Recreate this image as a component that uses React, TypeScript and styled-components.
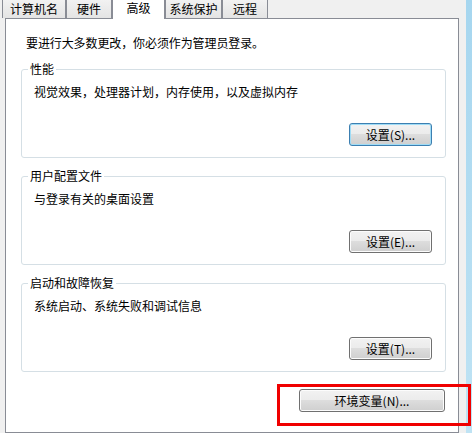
import React from "react";
import styled, { createGlobalStyle } from "styled-components";

const GlobalStyle = createGlobalStyle`
  html, body {
    margin: 0;
    padding: 0;
    background: #f0f0f0;
  }
  body {
    font-family: "Noto Sans CJK SC", "Liberation Sans", sans-serif;
    font-size: 12px;
    color: #000;
  }
`;

const tabs = [
  { label: "计算机名", width: 64 },
  { label: "硬件", width: 46 },
  { label: "高级", width: 53, active: true },
  { label: "系统保护", width: 57 },
  { label: "远程", width: 46 },
];

const groups = [
  { title: "性能", text: "视觉效果，处理器计划，内存使用，以及虚拟内存", button: "设置(S)...", isDefault: true },
  { title: "用户配置文件", text: "与登录有关的桌面设置", button: "设置(E)..." },
  { title: "启动和故障恢复", text: "系统启动、系统失败和调试信息", button: "设置(T)..." },
];

function App() {
  return (
    <Window>
      <GlobalStyle />
      <Main>
        <TabRow>
          {tabs.map((t) => (
            <Tab key={t.label} $active={!!t.active} $width={t.width}>
              {t.label}
            </Tab>
          ))}
        </TabRow>
        <Panel>
          <Intro>要进行大多数更改，你必须作为管理员登录。</Intro>
          {groups.map((g) => (
            <Group key={g.title}>
              <Legend>{g.title}</Legend>
              <GroupText>{g.text}</GroupText>
              <ButtonRow>
                <Button $isDefault={!!g.isDefault}>{g.button}</Button>
              </ButtonRow>
            </Group>
          ))}
          <EnvButton>环境变量(N)...</EnvButton>
        </Panel>
      </Main>
      <FrameEdge />
      <Highlight />
    </Window>
  );
}

export default App;

const Window = styled.div`
  position: relative;
  display: flex;
  width: 472px;
  height: 433px;
  overflow: hidden;
  background: #f0f0f0;
`;

const Main = styled.div`
  width: 466px;
  padding-left: 2px;
  box-sizing: border-box;
  display: flex;
  flex-direction: column;
`;

const FrameEdge = styled.div`
  flex: 1;
  background: linear-gradient(#a6d6ef, #bfe3f4);
`;

const TabRow = styled.div`
  display: flex;
  align-items: flex-end;
  height: 22px;
  margin-top: -4px;
`;

const Tab = styled.div<{ $active: boolean; $width: number }>`
  position: relative;
  z-index: ${(p) => (p.$active ? 1 : 0)};
  box-sizing: border-box;
  width: ${(p) => p.$width}px;
  height: ${(p) => (p.$active ? 24 : 22)}px;
  margin-bottom: ${(p) => (p.$active ? -1 : 0)}px;
  padding-top: 6px;
  border: 1px solid #898c95;
  border-bottom: none;
  border-radius: 2px 2px 0 0;
  background: ${(p) =>
    p.$active ? "#ffffff" : "linear-gradient(#f4f4f4, #e4e4e4)"};
  text-align: center;
  line-height: 12px;
  white-space: nowrap;
`;

const Panel = styled.div`
  margin-left: 3px;
  width: 454px;
  height: 440px;
  box-sizing: border-box;
  border: 1px solid #898c95;
  background: #ffffff;
  padding-top: 16px;
  display: flex;
  flex-direction: column;
  gap: 11px;
`;

const Intro = styled.div`
  padding-left: 20px;
  line-height: 16px;
  letter-spacing: -0.1px;
`;

const Group = styled.fieldset`
  margin: 0 12px 0 15px;
  padding: 8px 0 11px 0;
  border: 1px solid #d5dfe5;
  border-radius: 3px;
  min-inline-size: 0;
`;

const Legend = styled.legend`
  margin-left: 6px;
  padding: 0 2px;
  font-size: 12px;
  line-height: 14px;
`;

const GroupText = styled.div`
  padding-left: 12px;
  line-height: 16px;
`;

const ButtonRow = styled.div`
  display: flex;
  justify-content: flex-end;
  margin-top: 23px;
  padding-right: 13px;
`;

const Button = styled.button<{ $isDefault?: boolean }>`
  box-sizing: border-box;
  width: 83px;
  height: 23px;
  padding: 0;
  border: 1px solid ${(p) => (p.$isDefault ? "#3c7fb1" : "#707070")};
  border-radius: 3px;
  background: linear-gradient(#f2f2f2 0%, #ebebeb 50%, #dddddd 50%, #cfcfcf 100%);
  box-shadow: inset 0 0 0 1px ${(p) => (p.$isDefault ? "#9fdcf6" : "#fcfcfc")};
  font-family: "Noto Sans CJK SC", "Liberation Sans", sans-serif;
  font-size: 12px;
  line-height: 20px;
  color: #000;
`;

const EnvButton = styled(Button)`
  align-self: flex-end;
  width: 146px;
  margin-top: 6px;
  margin-right: 13px;
`;

const Highlight = styled.div`
  position: absolute;
  left: 277px;
  top: 384px;
  width: 194px;
  height: 42px;
  box-sizing: border-box;
  border: 3px solid #f00000;
  pointer-events: none;
`;
